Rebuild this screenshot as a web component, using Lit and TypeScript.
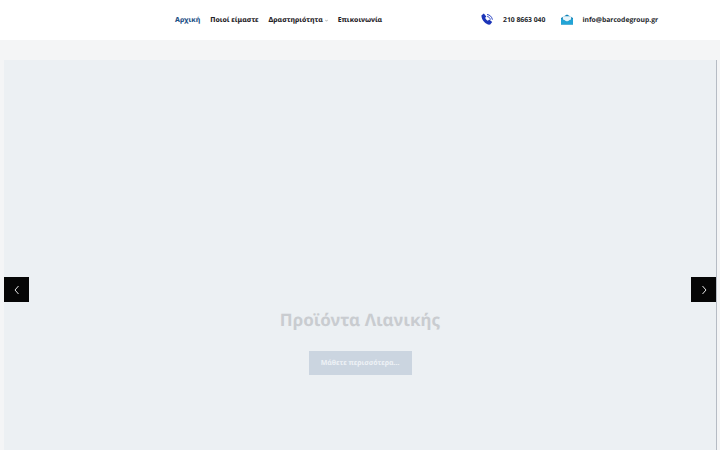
import { LitElement, html, css } from "lit";
import { customElement } from "lit/decorators.js";

@customElement("app-root")
export class AppRoot extends LitElement {
  static styles = css`
    :host { display: block; width: 720px; height: 450px; overflow: hidden; background: #f4f5f6; font-family: "Noto Sans", sans-serif; text-rendering: geometricPrecision; }
    .head { height: 40px; background: #fff; display: flex; align-items: center; padding-left: 175px; box-sizing: border-box; }
    nav { display: flex; gap: 10px; align-items: center; width: 306px; padding-top: 1px; }
    nav a { font-size: 6.9px; font-weight: 800; color: #1f2328; white-space: nowrap; display: flex; align-items: center; gap: 2px; }
    nav a.on { color: #1f5288; }
    .caret { width: 3px; height: 3px; }
    .contact { display: flex; align-items: center; font-family: "Open Sans", sans-serif; font-size: 6.8px; font-weight: 700; color: #23262b; margin-top: -1px; }
    .contact svg { display: block; }
    .phone { margin-right: 9px; }
    .tel { margin-right: 15.500px; white-space: nowrap; }
    .mail { margin-right: 9.500px; }
    .band { height: 20px; }
    .hero { position: relative; margin: 0 3px 0 4px; height: 390px; background: #ecf0f3; display: flex; flex-direction: column; align-items: center; box-sizing: border-box; padding-top: 247px; border-right: 1px solid #b6bcc4; }
    h1 { margin: 0; font-size: 17px; line-height: 26px; font-weight: 700; color: #c9ccd0; }
    .btn { margin-top: 18px; width: 103px; height: 24px; background: #cbd5e0; color: #eef2f6; font-size: 7px; font-weight: 700; display: flex; align-items: center; justify-content: center; }
    .arr { position: absolute; top: 217px; width: 25px; height: 25px; background: #060606; display: flex; align-items: center; justify-content: center; }
    .l { left: 0; }
    .r { right: 0; }
  `;
  render() {
    return html`
      <div class="head">
        <nav>
          <a class="on">Αρχική</a>
          <a>Ποιοί είμαστε</a>
          <a>Δραστηριότητα<svg class="caret" viewBox="0 0 6 6"><path d="M.5 1.500l2.500 3 2.500-3" fill="none" stroke="#888" stroke-width="1.200"/></svg></a>
          <a>Επικοινωνία</a>
        </nav>
        <div class="contact">
          <svg class="phone" width="13" height="13" viewBox="0 0 13 13">
            <path d="M.4 2.600 2.800.4l2.500 3-1.100 1.300c.4 1.300 1.400 2.400 2.700 3l1.300-1.100 3 2.300-2 2.700C5.500 12.400.6 7.700.4 2.600Z" fill="#1c35b8"/>
            <path d="M6 1.500c2.800.2 5 2.400 5.400 5.200M6.200 3.500c1.600.2 2.900 1.500 3.200 3.100" fill="none" stroke="#2a44c4" stroke-width="1"/>
          </svg>
          <span class="tel">210 8663 040</span>
          <svg class="mail" width="12" height="11" viewBox="0 0 13 11">
            <path d="M0 4 6.500 0 13 4v7H0Z" fill="#1483b8"/>
            <path d="M2 2h9v3.500L6.500 8 2 5.500Z" fill="#e6f4fa"/>
            <path d="M0 4.500 6.500 8 13 4.500V11H0Z" fill="#22a4d6"/>
          </svg>
          <span>info@barcodegroup.gr</span>
        </div>
      </div>
      <div class="band"></div>
      <div class="hero">
        <h1>Προϊόντα Λιανικής</h1>
        <div class="btn">Μάθετε περισσότερα...</div>
        <div class="arr l"><svg width="8" height="10" viewBox="0 0 8 10"><path d="M5.500 1 2 5l3.500 4" fill="none" stroke="#e4e4e4" stroke-width="1"/></svg></div>
        <div class="arr r"><svg width="8" height="10" viewBox="0 0 8 10"><path d="M2.500 1 6 5 2.500 9" fill="none" stroke="#e4e4e4" stroke-width="1"/></svg></div>
      </div>
    `;
  }
}
